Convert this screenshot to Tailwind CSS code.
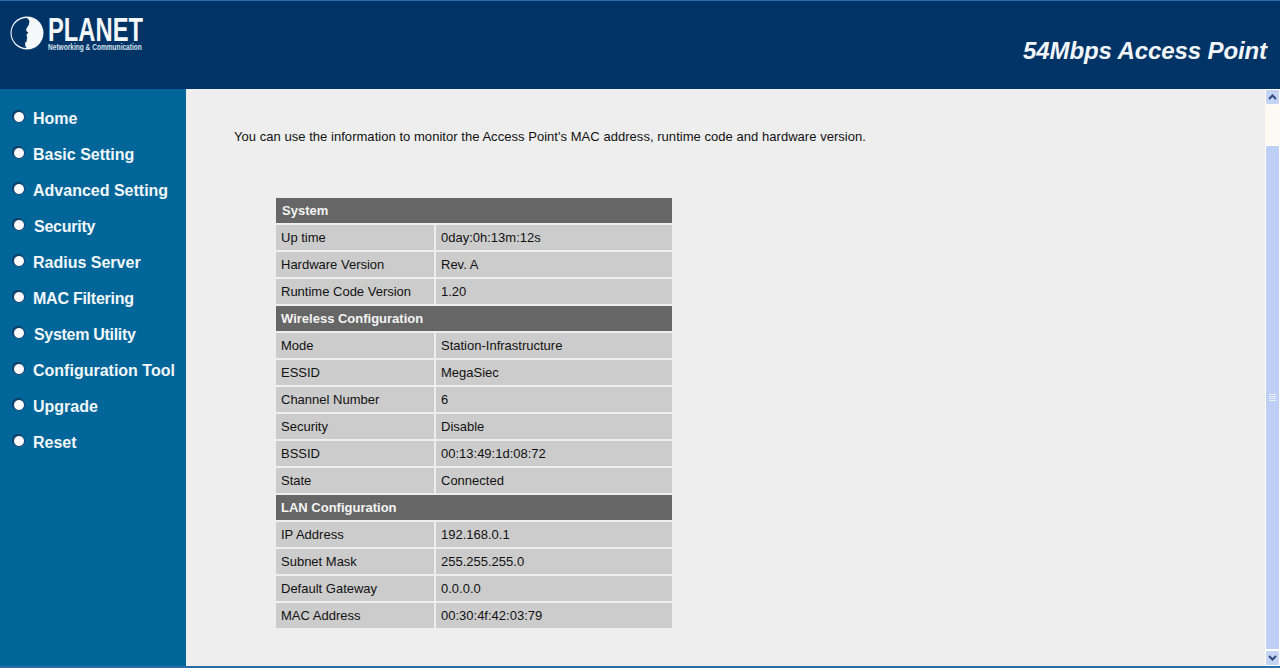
<!DOCTYPE html>
<html>
<head>
<meta charset="utf-8">
<script src="https://cdn.jsdelivr.net/npm/@tailwindcss/browser@4"></script>
</head>
<body class="m-0 overflow-hidden bg-[#eeeeee] font-['Liberation_Sans',Arial,sans-serif]">
<div class="flex h-[668px] w-[1280px] flex-col">
  <header class="flex h-[89px] shrink-0 items-start justify-between border-t border-[#2c6ca8] bg-[#003366]">
    <div class="flex items-start gap-[4px] pl-[10px] pt-[15px]">
      <svg width="34" height="34" viewBox="0 0 34 34" class="shrink-0">
        <circle cx="17" cy="17" r="16.5" fill="#f4f8fb"/>
        <path d="M17 2C8 2 1.6 9 1.6 17s6.4 15 15.4 15c-2.5-1.5-1.5-4-2-5.5 2-.5 2-2 1.6-3 1-.6.6-1.6.2-2.2.8-.6.2-1.4-.8-1.8 1-.6 1.6-2 2.2-3.2-1.2-.8-2.4-1-2-3 .8-2.6 3.2-3.8 3-6.5C20 5.5 19 3.5 17 2Z" fill="#003366"/>
      </svg>
      <div class="flex flex-col pt-[1px]">
        <span class="origin-top-left scale-x-[0.72] whitespace-nowrap text-[33px] font-bold leading-[26px] text-[#f4f8fb]">PLANET</span>
        <span class="origin-top-left scale-x-[0.73] whitespace-nowrap text-[9px] font-bold leading-[9px] text-[#d5e3ee]">Networking &amp; Communication</span>
      </div>
    </div>
    <div class="pr-[13px] pt-[36px] text-[24px] font-bold italic leading-[28px] tracking-[-0.1px] text-[#f2f6fa]">54Mbps Access Point</div>
  </header>
  <div class="flex min-h-0 flex-1">
    <nav class="flex w-[186px] shrink-0 flex-col gap-[14px] bg-[#006699] pl-[13px] pt-[18px] text-[16px] font-bold leading-[22px] text-[#f2f7fa]">
      <div class="flex h-[22px] items-center gap-[8px] pt-[2px]"><span class="mb-[4px] size-[12px] rounded-full border border-[#0b3a66] bg-white shadow-[-1px_-1px_0_#0b3a66]"></span>Home</div>
      <div class="flex h-[22px] items-center gap-[8px] pt-[2px]"><span class="mb-[4px] size-[12px] rounded-full border border-[#0b3a66] bg-white shadow-[-1px_-1px_0_#0b3a66]"></span>Basic Setting</div>
      <div class="flex h-[22px] items-center gap-[8px] pt-[2px]"><span class="mb-[4px] size-[12px] rounded-full border border-[#0b3a66] bg-white shadow-[-1px_-1px_0_#0b3a66]"></span>Advanced Setting</div>
      <div class="flex h-[22px] items-center gap-[9px] pt-[2px] tracking-[-0.25px]"><span class="mb-[4px] size-[12px] rounded-full border border-[#0b3a66] bg-white shadow-[-1px_-1px_0_#0b3a66]"></span>Security</div>
      <div class="flex h-[22px] items-center gap-[8px] pt-[2px]"><span class="mb-[4px] size-[12px] rounded-full border border-[#0b3a66] bg-white shadow-[-1px_-1px_0_#0b3a66]"></span>Radius Server</div>
      <div class="flex h-[22px] items-center gap-[8px] pt-[2px] tracking-[-0.25px]"><span class="mb-[4px] size-[12px] rounded-full border border-[#0b3a66] bg-white shadow-[-1px_-1px_0_#0b3a66]"></span>MAC Filtering</div>
      <div class="flex h-[22px] items-center gap-[9px] pt-[2px] tracking-[-0.3px]"><span class="mb-[4px] size-[12px] rounded-full border border-[#0b3a66] bg-white shadow-[-1px_-1px_0_#0b3a66]"></span>System Utility</div>
      <div class="flex h-[22px] items-center gap-[8px] pt-[2px]"><span class="mb-[4px] size-[12px] rounded-full border border-[#0b3a66] bg-white shadow-[-1px_-1px_0_#0b3a66]"></span>Configuration Tool</div>
      <div class="flex h-[22px] items-center gap-[8px] pt-[2px]"><span class="mb-[4px] size-[12px] rounded-full border border-[#0b3a66] bg-white shadow-[-1px_-1px_0_#0b3a66]"></span>Upgrade</div>
      <div class="flex h-[22px] items-center gap-[8px] pt-[2px]"><span class="mb-[4px] size-[12px] rounded-full border border-[#0b3a66] bg-white shadow-[-1px_-1px_0_#0b3a66]"></span>Reset</div>
    </nav>
    <main class="min-w-0 flex-1 pl-[48px] pt-[39px] text-[13px] leading-[16px] text-[#111111]">
      <p class="pt-[1px] tracking-[0.04px]">You can use the information to monitor the Access Point's MAC address, runtime code and hardware version.</p>
      <div class="ml-[42px] mt-[53px] flex w-[396px] flex-col gap-[2px]">
        <div class="flex h-[25px] items-center bg-[#666666] pl-[6px] font-bold text-[#f4f4f4]">System</div>
        <div class="flex h-[25px] gap-[2px]"><div class="flex w-[158px] items-center bg-[#cccccc] pl-[5px]">Up time</div><div class="flex flex-1 items-center bg-[#cccccc] pl-[5px]">0day:0h:13m:12s</div></div>
        <div class="flex h-[25px] gap-[2px]"><div class="flex w-[158px] items-center bg-[#cccccc] pl-[5px]">Hardware Version</div><div class="flex flex-1 items-center bg-[#cccccc] pl-[5px]">Rev. A</div></div>
        <div class="flex h-[25px] gap-[2px]"><div class="flex w-[158px] items-center bg-[#cccccc] pl-[5px]">Runtime Code Version</div><div class="flex flex-1 items-center bg-[#cccccc] pl-[5px]">1.20</div></div>
        <div class="flex h-[25px] items-center bg-[#666666] pl-[5px] font-bold text-[#f4f4f4]">Wireless Configuration</div>
        <div class="flex h-[25px] gap-[2px]"><div class="flex w-[158px] items-center bg-[#cccccc] pl-[5px]">Mode</div><div class="flex flex-1 items-center bg-[#cccccc] pl-[5px]">Station-Infrastructure</div></div>
        <div class="flex h-[25px] gap-[2px]"><div class="flex w-[158px] items-center bg-[#cccccc] pl-[5px]">ESSID</div><div class="flex flex-1 items-center bg-[#cccccc] pl-[5px]">MegaSiec</div></div>
        <div class="flex h-[25px] gap-[2px]"><div class="flex w-[158px] items-center bg-[#cccccc] pl-[5px]">Channel Number</div><div class="flex flex-1 items-center bg-[#cccccc] pl-[5px]">6</div></div>
        <div class="flex h-[25px] gap-[2px]"><div class="flex w-[158px] items-center bg-[#cccccc] pl-[5px]">Security</div><div class="flex flex-1 items-center bg-[#cccccc] pl-[5px]">Disable</div></div>
        <div class="flex h-[25px] gap-[2px]"><div class="flex w-[158px] items-center bg-[#cccccc] pl-[5px]">BSSID</div><div class="flex flex-1 items-center bg-[#cccccc] pl-[5px]">00:13:49:1d:08:72</div></div>
        <div class="flex h-[25px] gap-[2px]"><div class="flex w-[158px] items-center bg-[#cccccc] pl-[5px]">State</div><div class="flex flex-1 items-center bg-[#cccccc] pl-[5px]">Connected</div></div>
        <div class="flex h-[25px] items-center bg-[#666666] pl-[5px] font-bold text-[#f4f4f4]">LAN Configuration</div>
        <div class="flex h-[25px] gap-[2px]"><div class="flex w-[158px] items-center bg-[#cccccc] pl-[5px]">IP Address</div><div class="flex flex-1 items-center bg-[#cccccc] pl-[5px]">192.168.0.1</div></div>
        <div class="flex h-[25px] gap-[2px]"><div class="flex w-[158px] items-center bg-[#cccccc] pl-[5px]">Subnet Mask</div><div class="flex flex-1 items-center bg-[#cccccc] pl-[5px]">255.255.255.0</div></div>
        <div class="flex h-[25px] gap-[2px]"><div class="flex w-[158px] items-center bg-[#cccccc] pl-[5px]">Default Gateway</div><div class="flex flex-1 items-center bg-[#cccccc] pl-[5px]">0.0.0.0</div></div>
        <div class="flex h-[25px] gap-[2px]"><div class="flex w-[158px] items-center bg-[#cccccc] pl-[5px]">MAC Address</div><div class="flex flex-1 items-center bg-[#cccccc] pl-[5px]">00:30:4f:42:03:79</div></div>
      </div>
    </main>
    <aside class="flex w-[15px] shrink-0 flex-col bg-[#fbfaf3]">
      <div class="flex h-[16px] items-center justify-center rounded-[2px] border border-white bg-[#c5d4f4]">
        <svg width="9" height="6" viewBox="0 0 9 6"><path d="M1 5l3.5-3.5L8 5" fill="none" stroke="#2f4a80" stroke-width="2"/></svg>
      </div>
      <div class="mt-[40px] flex flex-1 flex-col items-center justify-center gap-[1px] rounded-[2px] border border-white bg-[#bdcff5]">
        <span class="h-px w-[7px] bg-[#e9effc]"></span><span class="h-px w-[7px] bg-[#e9effc]"></span><span class="h-px w-[7px] bg-[#e9effc]"></span><span class="h-px w-[7px] bg-[#e9effc]"></span>
      </div>
      <div class="flex h-[16px] items-center justify-center rounded-[2px] border border-white bg-[#c5d4f4]">
        <svg width="9" height="6" viewBox="0 0 9 6"><path d="M1 1l3.5 3.5L8 1" fill="none" stroke="#2f4a80" stroke-width="2"/></svg>
      </div>
    </aside>
  </div>
  <div class="h-[2px] shrink-0 bg-[#2c6ca8]"></div>
</div>
</body>
</html>
